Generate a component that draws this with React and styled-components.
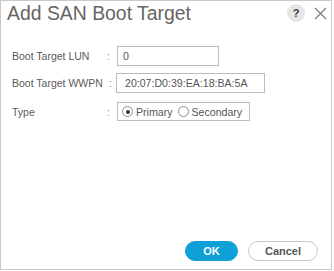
import React from 'react';
import styled, { createGlobalStyle } from 'styled-components';

const GlobalStyle = createGlobalStyle`
  html, body {
    margin: 0;
    padding: 0;
    background: #ffffff;
  }
  body {
    font-family: "Liberation Sans", Arial, sans-serif;
  }
`;

const Dialog = styled.div`
  width: 332px;
  height: 270px;
  box-sizing: border-box;
  border: 1px solid #c9c9c9;
  background: #ffffff;
  display: flex;
  flex-direction: column;
`;

const Header = styled.div`
  display: flex;
  align-items: flex-start;
  padding: 2px 0 0 6px;
  height: 28px;
  box-sizing: border-box;
`;

const Title = styled.h1`
  margin: 0;
  font-size: 19.4px;
  line-height: 20px;
  font-weight: normal;
  color: #666666;
  flex: 1;
`;

const HeaderTools = styled.div`
  display: flex;
  align-items: center;
  gap: 9px;
  padding: 1px 4px 0 0;
`;

const HelpButton = styled.span`
  width: 18px;
  height: 18px;
  border-radius: 50%;
  background: #e6e6e6;
  color: #3a3a3a;
  font-size: 11px;
  font-weight: bold;
  display: flex;
  align-items: center;
  justify-content: center;
`;

const CloseButton = styled.span`
  display: flex;
  width: 13px;
  height: 13px;
`;

const Form = styled.div`
  display: flex;
  flex-direction: column;
  padding: 17px 0 0 11px;
`;

const Row = styled.div`
  display: flex;
  align-items: center;
  margin-bottom: ${p => p.$gap}px;
`;

const Label = styled.span`
  min-width: 91px;
  font-size: 10.5px;
  color: #5a5a5a;
`;

const Colon = styled.span`
  width: 3px;
  margin: 0 ${p => p.$after ?? 7}px 0 ${p => p.$before ?? 4}px;
  font-size: 10.5px;
  color: #8a8a8a;
`;

const Input = styled.div`
  width: ${p => p.$width}px;
  height: 20px;
  box-sizing: border-box;
  border: 1px solid #bcbcbc;
  padding: 0 0 0 ${p => p.$pad}px;
  font-size: 10.6px;
  color: #555555;
  display: flex;
  align-items: center;
`;

const RadioGroup = styled.div`
  width: 133px;
  height: 19px;
  box-sizing: border-box;
  border: 1px solid #bcbcbc;
  padding-left: 4px;
  display: flex;
  align-items: center;
`;

const RadioItem = styled.label`
  display: flex;
  align-items: center;
  gap: 3px;
  margin-right: 5px;
  font-size: 10.6px;
  color: #555555;
`;

const RadioCircle = styled.span`
  width: 11px;
  height: 11px;
  box-sizing: border-box;
  border-radius: 50%;
  border: 1px solid #8c8c8c;
  background: #ffffff;
  display: flex;
  align-items: center;
  justify-content: center;
  &::after {
    content: '';
    width: 4px;
    height: 4px;
    border-radius: 50%;
    background: ${p => (p.$checked ? '#333333' : 'transparent')};
  }
`;

const Footer = styled.div`
  margin-top: auto;
  display: flex;
  justify-content: flex-end;
  gap: 10px;
  padding: 0 13px 8px 0;
`;

const Button = styled.button`
  height: 20px;
  width: ${p => p.$width}px;
  border-radius: 10px;
  font-family: "Liberation Sans", Arial, sans-serif;
  font-size: 11px;
  font-weight: bold;
  padding: 0;
  cursor: pointer;
  border: 1px solid ${p => (p.$primary ? '#0fa0d8' : '#c8c8c8')};
  background: ${p => (p.$primary ? '#0fa0d8' : '#ffffff')};
  color: ${p => (p.$primary ? '#ffffff' : '#555555')};
`;

export default function App() {
  return (
    <>
      <GlobalStyle />
      <Dialog>
        <Header>
          <Title>Add SAN Boot Target</Title>
          <HeaderTools>
            <HelpButton>?</HelpButton>
            <CloseButton>
              <svg width="13" height="13" viewBox="0 0 13 13">
                <path d="M1 1 L12 12 M12 1 L1 12" stroke="#7a7a7a" strokeWidth="1.1" fill="none" />
              </svg>
            </CloseButton>
          </HeaderTools>
        </Header>
        <Form>
          <Row $gap={7}>
            <Label>Boot Target LUN</Label>
            <Colon>:</Colon>
            <Input $width={102} $pad={5}>0</Input>
          </Row>
          <Row $gap={9}>
            <Label>Boot Target WWPN</Label>
            <Colon $before={6} $after={4}>:</Colon>
            <Input $width={149} $pad={8}>20:07:D0:39:EA:18:BA:5A</Input>
          </Row>
          <Row $gap={0}>
            <Label>Type</Label>
            <Colon>:</Colon>
            <RadioGroup>
              <RadioItem>
                <RadioCircle $checked />
                Primary
              </RadioItem>
              <RadioItem>
                <RadioCircle />
                Secondary
              </RadioItem>
            </RadioGroup>
          </Row>
        </Form>
        <Footer>
          <Button $primary $width={53}>OK</Button>
          <Button $width={70}>Cancel</Button>
        </Footer>
      </Dialog>
    </>
  );
}
